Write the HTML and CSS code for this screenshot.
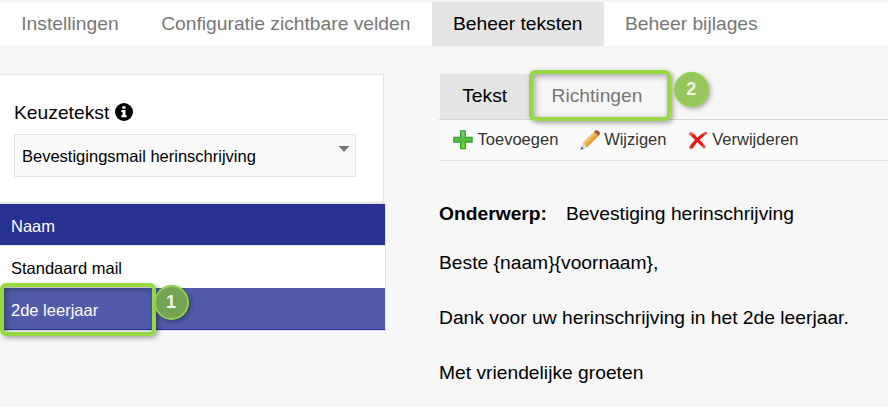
FILE: index.html
```html
<!DOCTYPE html>
<html lang="nl">
<head>
    <meta charset="UTF-8">
    <meta name="viewport" content="width=device-width, initial-scale=1.0">
    <title>Beheer teksten</title>
    <link rel="stylesheet" href="styles.css">
</head>
<body>
    <nav class="main-tabs">
        <a class="tab">Instellingen</a>
        <a class="tab">Configuratie zichtbare velden</a>
        <a class="tab active">Beheer teksten</a>
        <a class="tab">Beheer bijlages</a>
    </nav>
    <div class="content">
        <div class="sidebar">
            <div class="filter">
                <label class="filter-label">Keuzetekst
                    <svg class="info" viewBox="0 0 18 18" width="18" height="18">
                        <circle cx="9" cy="9" r="9"/>
                        <path fill="#fff" d="M7.3 3.2h3.2v2.5H7.3zM6.3 7h4.2v5.3h1.2v1.9H6.3v-1.9h1.2V8.9H6.3z"/>
                    </svg>
                </label>
                <div class="select">
                    <span>Bevestigingsmail herinschrijving</span>
                    <svg class="arrow" viewBox="0 0 12 6" width="12" height="6"><path fill="#777" d="M.5 0h11L6 6z"/></svg>
                </div>
            </div>
            <div class="grid">
                <div class="grid-head">Naam</div>
                <div class="grid-row">Standaard mail</div>
                <div class="grid-row selected">2de leerjaar
                    <div class="mark mark-row"></div>
                    <div class="badge badge-row">1</div>
                </div>
            </div>
        </div>
        <div class="detail">
            <div class="sub-tabs">
                <a class="sub-tab active">Tekst</a>
                <a class="sub-tab">Richtingen
                    <div class="mark mark-tab"></div>
                    <div class="badge badge-tab">2</div>
                </a>
            </div>
            <div class="toolbar">
                <button class="tool">
                    <svg viewBox="0 0 20 20" width="20" height="20">
                        <defs>
                            <linearGradient id="plus" x1="0" y1="0" x2="0" y2="1">
                                <stop offset="0" stop-color="#8fd07f"/>
                                <stop offset=".5" stop-color="#4fbb3c"/>
                                <stop offset="1" stop-color="#84f000"/>
                            </linearGradient>
                        </defs>
                        <path fill="url(#plus)" stroke="#35a036" stroke-width="1.3" d="M7.7.8h4.6v6.6h6.8v4.6h-6.8v6.7H7.7V12H.9V7.4h6.8z"/>
                    </svg>
                    Toevoegen
                </button>
                <button class="tool">
                    <svg viewBox="0 0 20 20" width="20" height="20">
                        <path fill="#f0ae45" d="M2.8 13L14 1.7l4.4 4.2L7 17.2z"/>
                        <path fill="#f6c772" d="M2.8 13L14 1.7l1.5 1.4L4.2 14.5z"/>
                        <path fill="#e09a38" d="M5.7 16L17.1 4.7l1.3 1.2L7 17.2z"/>
                        <path fill="#ddd8d2" d="M2.8 13L7 17.2l-6.2 2.4z"/>
                        <path fill="#555" d="M1.6 16.8l2 2-3.2 1z"/>
                        <path fill="#a05a35" d="M14.2 1.5Q16.7-.6 18.8 1.2t.5 3.8l-.9.9L14 1.7z"/>
                    </svg>
                    Wijzigen
                </button>
                <button class="tool">
                    <svg viewBox="0 0 20 20" width="20" height="20">
                        <path fill="none" stroke="#ee9a93" stroke-width="4" stroke-linecap="round" d="M2.8 3.8L6 6M3 17.3L5 14.500"/>
                        <path fill="none" stroke="#e8544c" stroke-width="3" stroke-linecap="round" d="M3 4Q8 8 16 16.800M17.600 3.200Q9 8 3 17.300"/>
                        <path fill="none" stroke="#e3150e" stroke-width="2.8" stroke-linecap="round" d="M5.500 6L14 14.500M14.500 5.300Q8 10 4 16.500"/>
                    </svg>
                    Verwijderen
                </button>
            </div>
            <div class="message">
                <div class="subject"><b>Onderwerp:</b><span>Bevestiging herinschrijving</span></div>
                <p>Beste {naam}{voornaam},</p>
                <p>Dank voor uw herinschrijving in het 2de leerjaar.</p>
                <p>Met vriendelijke groeten</p>
            </div>
        </div>
    </div>
</body>
</html>
```
FILE: styles.css
```css
* {
    box-sizing: border-box;
}
body {
    margin: 0;
    padding-top: 2px;
    height: 407px;
    overflow: hidden;
    background-color: #f6f6f6;
    color: #000;
    font-family: "Liberation Sans", Arial, sans-serif;
    font-size: 19.25px;
}
.main-tabs {
    display: flex;
    height: 44px;
    background-color: #fff;
}
.tab {
    padding: 0 21.26px;
    line-height: 44px;
    color: #777;
    white-space: nowrap;
}
.tab.active, .sub-tab.active {
    background-color: #e4e4e4;
    color: #000;
}
.content {
    display: flex;
    gap: 53px;
    padding-top: 28px;
}
.sidebar {
    width: 386px;
}
.filter {
    width: 384px;
    height: 129px;
    padding: 26px 27px 0 14px;
    border: 1px solid #e4e4e4;
    border-left: 0;
    background-color: #fff;
}
.filter-label {
    display: flex;
    align-items: center;
    gap: 6px;
    height: 24px;
}
.info {
    margin-top: -2px;
}
.select {
    display: flex;
    justify-content: space-between;
    height: 43px;
    margin-top: 9px;
    padding: 0 5px 0 7px;
    border: 1px solid #e4e4e4;
    background-color: #f9f9f9;
    font-size: 16.5px;
    line-height: 43px;
}
.arrow {
    margin-top: 11px;
}
.grid {
    border: 1px solid #e0e0e4;
    border-left: 0;
    font-size: 16.5px;
}
.grid-head {
    height: 42px;
    padding-left: 11px;
    border-bottom: 1px solid #e4e4e4;
    background-color: #263192;
    color: #fff;
    line-height: 44px;
}
.grid-row {
    height: 42px;
    padding-left: 11px;
    background-color: #fff;
    line-height: 44px;
}
.grid-row.selected {
    position: relative;
    border-bottom: 1px solid #263192;
    background-color: #525ba9;
    color: #fff;
}
.detail {
    flex: 1;
}
.sub-tabs {
    display: flex;
    height: 46px;
    padding-left: 1px;
    border-bottom: 1px solid #d3d3d3;
}
.sub-tab {
    position: relative;
    padding: 0 22.2px;
    line-height: 44px;
    color: #777;
}
.toolbar {
    display: flex;
    gap: 21.2px;
    height: 41px;
    padding: 0 0 1px 14px;
    border-bottom: 1px solid #e2e2e2;
    background-color: #fafafa;
}
.tool {
    display: flex;
    align-items: center;
    gap: 4.6px;
    padding: 0;
    border: 0;
    background: none;
    color: #333;
    font-family: inherit;
    font-size: 16.5px;
}
.message {
    padding-top: 41px;
}
.subject {
    display: flex;
    gap: 19px;
    line-height: 24px;
    margin-bottom: 25px;
}
.message p {
    margin: 0 0 31px;
    line-height: 24px;
}

/* numbered callouts */
.mark {
    position: absolute;
    border: 4px solid #96d844;
    border-radius: 6px;
    box-shadow: 2px 2px 5px rgba(0, 0, 0, .35), inset 2px 2px 6px rgba(0, 0, 0, .35);
}
.mark-row {
    left: 0;
    top: -5px;
    width: 156px;
    height: 53px;
}
.mark-tab {
    left: -.5px;
    top: -4px;
    width: 142px;
    height: 51px;
}
.badge {
    position: absolute;
    width: 35px;
    height: 35px;
    border: 2px solid #92d050;
    border-radius: 50%;
    box-shadow: 2px 2px 4px rgba(0, 0, 0, .3);
    color: #f0f5e8;
    font-size: 18px;
    font-weight: bold;
    line-height: 30px;
    text-align: center;
}
.badge-row {
    left: 153.5px;
    top: -3px;
    background-color: #76a352;
}
.badge-tab {
    left: 144.5px;
    top: -2px;
    background-color: #98c65c;
}
```
